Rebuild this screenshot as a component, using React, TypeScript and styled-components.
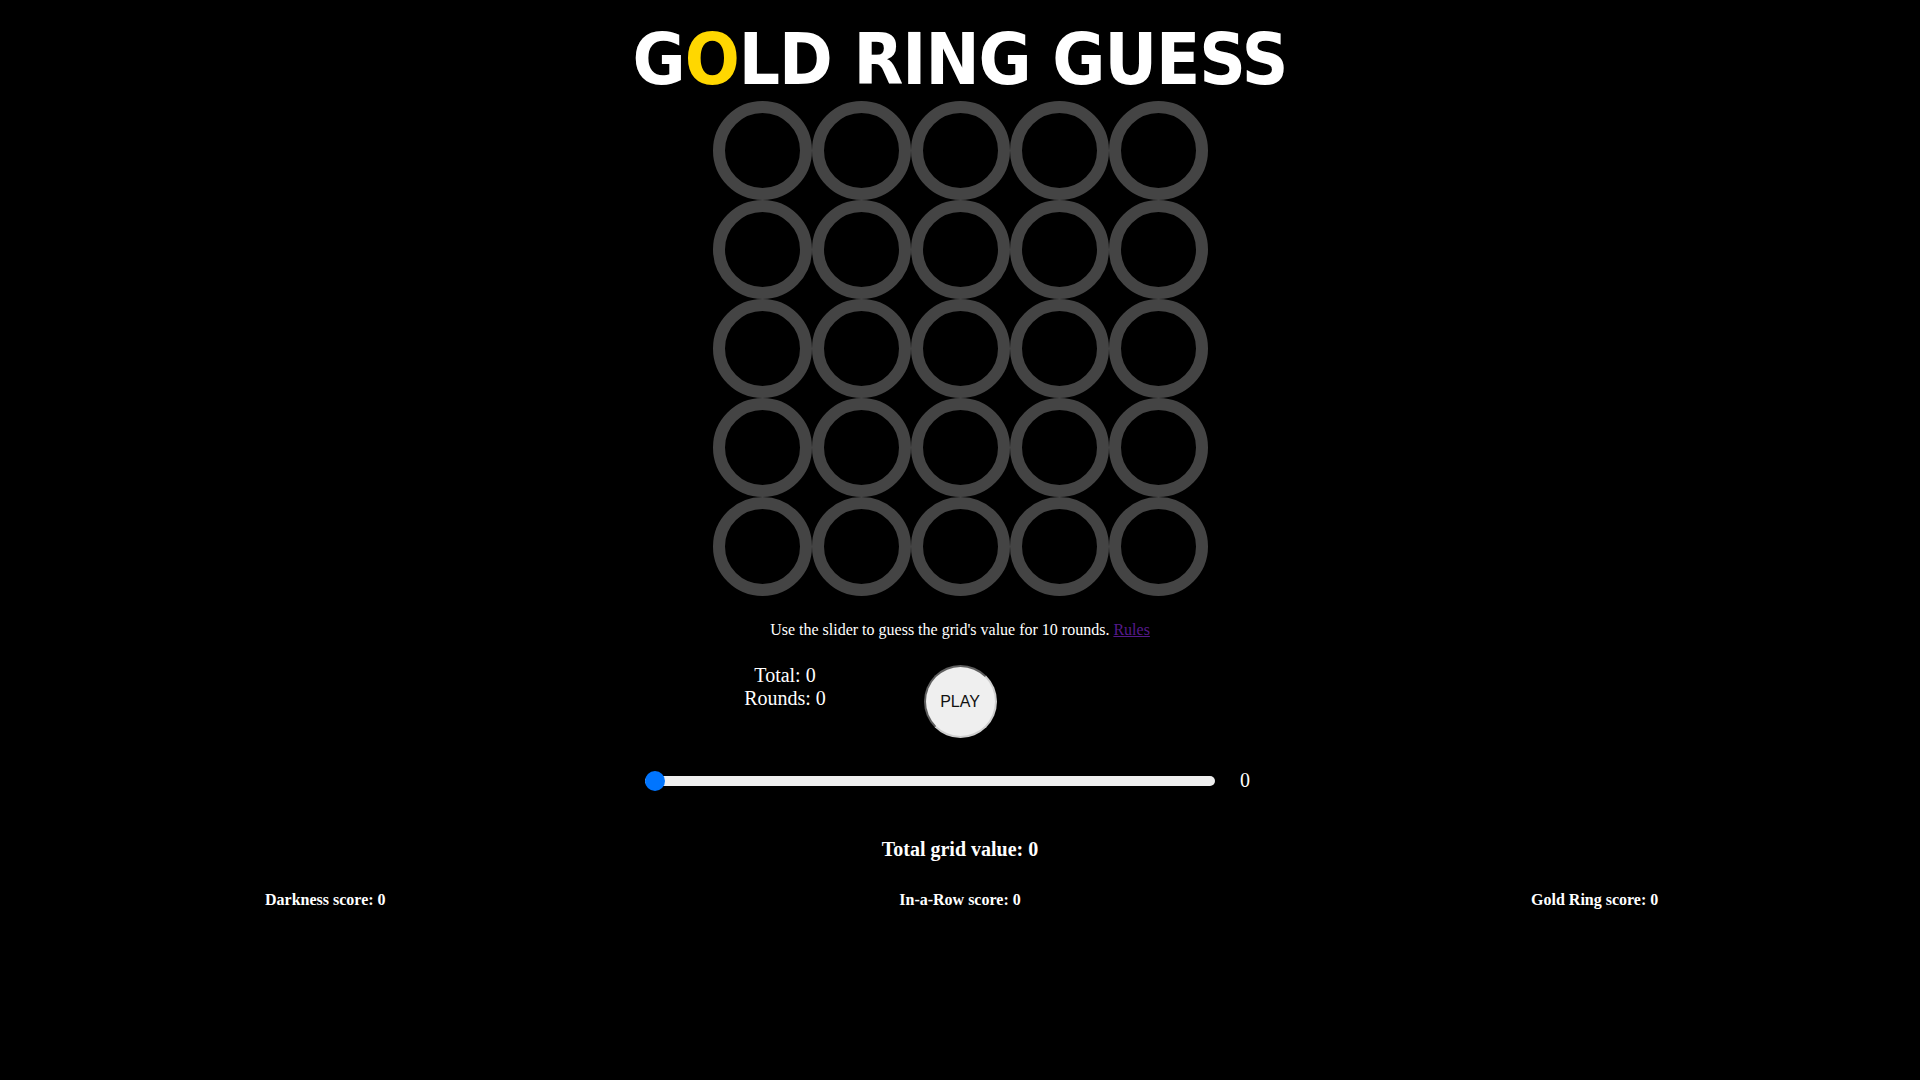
import React, { useState } from "react";
import styled, { createGlobalStyle } from "styled-components";

const GlobalStyle = createGlobalStyle`
  html, body {
    margin: 0;
    padding: 0;
    background: #000;
  }
  body {
    color: #fff;
    font-family: "Liberation Serif", "Times New Roman", serif;
  }
`;

const Page = styled.main`
  display: flex;
  flex-direction: column;
  align-items: center;
  padding-top: 17px;
  min-height: 1080px;
  box-sizing: border-box;
`;

const Title = styled.h1`
  margin: 0;
  font-family: "DejaVu Sans Condensed", "DejaVu Sans", sans-serif;
  font-stretch: condensed;
  font-weight: 700;
  font-size: 72px;
  line-height: 84px;
  letter-spacing: -1px;
  color: #fff;
  white-space: nowrap;
`;

const Gold = styled.span`
  color: #ffd700;
`;

const Grid = styled.div`
  display: grid;
  grid-template-columns: repeat(5, 99px);
  grid-auto-rows: 99px;
`;

const Ring = styled.div<{ $color?: string }>`
  box-sizing: border-box;
  width: 99px;
  height: 99px;
  border-radius: 50%;
  border: 12px solid ${(p) => p.$color ?? "#444"};
`;

const Instructions = styled.p`
  margin: 25px 0 0;
  font-size: 16px;
  line-height: 18.4px;
`;

const RulesLink = styled.a`
  color: #551a8b;
  text-decoration: underline;
`;

const ControlRow = styled.div`
  display: grid;
  grid-template-columns: repeat(3, 175px);
  align-items: start;
  margin-top: 25px;
`;

const Stats = styled.div`
  text-align: center;
  font-size: 20px;
  line-height: 23px;
`;

const PlayButton = styled.button`
  justify-self: center;
  box-sizing: border-box;
  width: 73px;
  height: 73px;
  margin-top: 1px;
  padding: 0;
  border-radius: 50%;
  border: 2px solid;
  border-color: #5f5f5f #cfcfcf #cfcfcf #5f5f5f;
  background: #efefef;
  color: #111;
  font-family: "Liberation Sans", Arial, sans-serif;
  font-size: 16px;
  cursor: pointer;
`;

const SliderRow = styled.div`
  display: flex;
  align-items: center;
  margin-top: 31px;
`;

const Slider = styled.input`
  -webkit-appearance: none;
  appearance: none;
  width: 570px;
  height: 20px;
  margin: 0;
  background: transparent;

  &::-webkit-slider-runnable-track {
    height: 10px;
    background: #efefef;
    border-radius: 5px;
  }
  &::-webkit-slider-thumb {
    -webkit-appearance: none;
    appearance: none;
    width: 20px;
    height: 20px;
    margin-top: -5px;
    border: none;
    border-radius: 50%;
    background: #0075ff;
  }
  &::-moz-range-track {
    height: 10px;
    background: #efefef;
    border-radius: 5px;
  }
  &::-moz-range-thumb {
    width: 20px;
    height: 20px;
    border: none;
    border-radius: 50%;
    background: #0075ff;
  }
`;

const SliderValue = styled.span`
  width: 60px;
  text-align: center;
  font-size: 20px;
  line-height: 23px;
`;

const GridValue = styled.h3`
  margin: 46px 0 0;
  font-size: 20px;
  line-height: 23px;
  font-weight: 700;
`;

const Scores = styled.div`
  display: grid;
  grid-template-columns: repeat(3, 1fr);
  width: 100%;
  box-sizing: border-box;
  padding: 0 8px;
  margin-top: 30px;
`;

const Score = styled.h4`
  margin: 0;
  text-align: center;
  font-size: 16px;
  line-height: 18.4px;
  font-weight: 700;
`;

export default function App() {
  const [guess, setGuess] = useState(0);
  const rings = Array.from({ length: 25 }, (_, i) => i);

  return (
    <>
      <GlobalStyle />
      <Page>
        <Title>
          G<Gold>O</Gold>LD RING GUESS
        </Title>
        <Grid>
          {rings.map((i) => (
            <Ring key={i} />
          ))}
        </Grid>
        <Instructions>
          Use the slider to guess the grid's value for 10 rounds.{" "}
          <RulesLink href="#rules">Rules</RulesLink>
        </Instructions>
        <ControlRow>
          <Stats>
            <div>Total: 0</div>
            <div>Rounds: 0</div>
          </Stats>
          <PlayButton type="button">PLAY</PlayButton>
        </ControlRow>
        <SliderRow>
          <Slider
            type="range"
            min={0}
            max={100}
            value={guess}
            onChange={(e) => setGuess(Number(e.target.value))}
          />
          <SliderValue>{guess}</SliderValue>
        </SliderRow>
        <GridValue>Total grid value: 0</GridValue>
        <Scores>
          <Score>Darkness score: 0</Score>
          <Score>In-a-Row score: 0</Score>
          <Score>Gold Ring score: 0</Score>
        </Scores>
      </Page>
    </>
  );
}
